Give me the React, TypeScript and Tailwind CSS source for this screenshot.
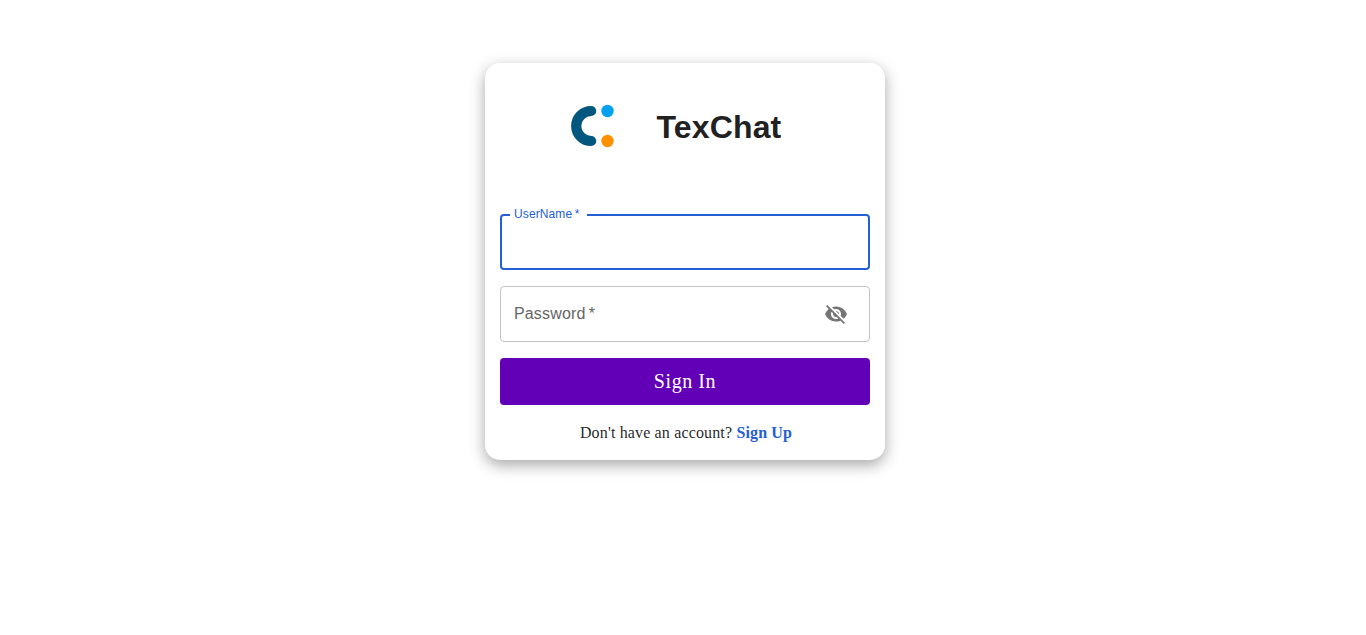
import { useState } from "react";
import { MdVisibility, MdVisibilityOff } from "react-icons/md";

function Logo() {
  return (
    <svg width="44" height="44" viewBox="0 0 44 44" className="overflow-visible" aria-hidden="true">
      <path
        d="M20.2 6 A15 15 0 0 0 20.2 36"
        fill="none"
        stroke="#02577f"
        strokeWidth="10.2"
        strokeLinecap="round"
      />
      <circle cx="36.5" cy="6" r="6.2" fill="#03a2f1" />
      <circle cx="36.5" cy="36" r="6.2" fill="#ff9100" />
    </svg>
  );
}

export default function App() {
  const [visible, setVisible] = useState(false);

  return (
    <main className="flex min-h-[635px] justify-center bg-white pl-1 pt-[63px] font-['Liberation_Serif',serif] text-[#212121]">
      <form
        onSubmit={(event) => event.preventDefault()}
        className="h-[397px] w-[400px] rounded-[15px] bg-white px-[15px] shadow-[0_5px_15px_rgba(0,0,0,0.35)]"
      >
        <header className="flex h-[151px] items-start pl-[71px] pt-[42px]">
          <Logo />
          <h1 className="ml-[41.5px] mt-[-1px] font-['Liberation_Sans',sans-serif] text-[32px] font-bold leading-[46px] tracking-[0.15px]">
            TexChat
          </h1>
        </header>

        <div className="relative h-14 font-['Liberation_Sans',sans-serif] text-base tracking-[0.00938em]">
          <label
            htmlFor="username"
            className="pointer-events-none absolute left-0 top-0 z-10 origin-top-left transform-[translate(14px,-9px)_scale(0.75)] leading-[23px] text-[#245fd6]"
          >
            UserName<span>{"\u2009*"}</span>
          </label>
          <input id="username" className="h-14 w-full bg-transparent px-3.5 text-[#212121] caret-transparent outline-none" />
          <fieldset className="pointer-events-none absolute inset-x-0 -top-[5px] bottom-0 rounded-[4px] border-2 border-[#245fd6] px-2">
            <legend className="h-[11px] w-[77px]" />
          </fieldset>
        </div>

        <div className="relative mt-4 flex h-14 items-center rounded-[4px] border border-[#c4c4c4] pr-[21px] font-['Liberation_Sans',sans-serif] text-base tracking-[0.00938em]">
          <label
            htmlFor="password"
            className="pointer-events-none absolute left-0 top-0 transform-[translate(13px,15px)] leading-[23px] text-[#666666]"
          >
            Password<span>{"\u2009*"}</span>
          </label>
          <input
            id="password"
            type={visible ? "text" : "password"}
            className="h-full min-w-0 flex-1 bg-transparent px-3.5 outline-none"
          />
          <button type="button" aria-label="Toggle password visibility" onClick={() => setVisible(!visible)}>
            {visible ? <MdVisibility size={24} color="#757575" /> : <MdVisibilityOff size={24} color="#757575" />}
          </button>
        </div>

        <button
          type="submit"
          className="mt-4 h-[47px] w-full rounded-[4px] bg-[#6200b8] text-[20px] leading-[35px] tracking-[0.02857em] text-white"
        >
          Sign In
        </button>
        <p className="mt-4 pl-0.5 text-center text-base leading-6 tracking-[0.00938em] text-black/87">
          Don't have an account?{" "}
          <a href="#signup" className="font-bold text-[#245fd6]">
            Sign Up
          </a>
        </p>
      </form>
    </main>
  );
}
